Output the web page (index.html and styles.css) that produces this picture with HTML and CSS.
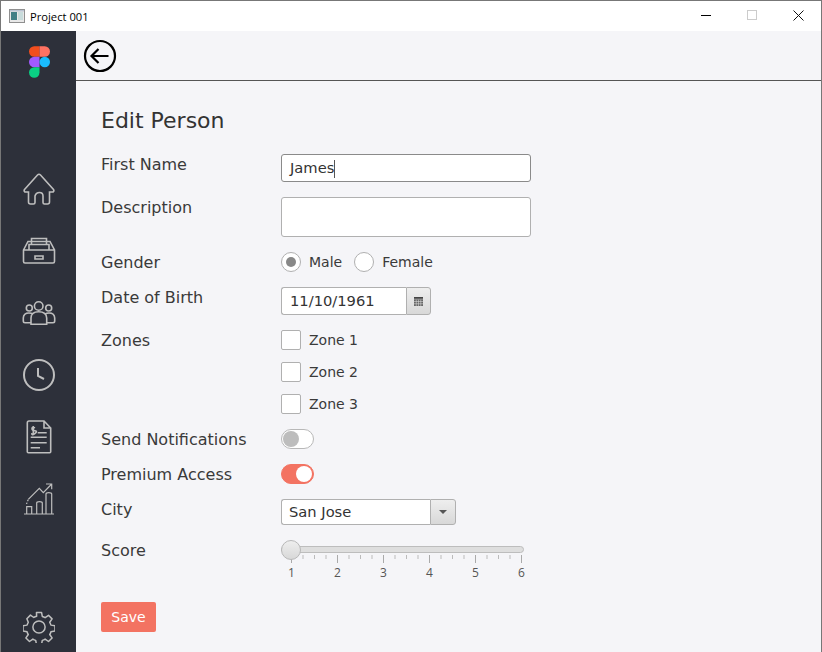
FILE: index.html
```html
<!DOCTYPE html>
<html lang="en">
<head>
    <meta charset="UTF-8">
    <meta name="viewport" content="width=device-width, initial-scale=1.0">
    <title>Project 001</title>
    <link rel="stylesheet" href="styles.css">
</head>
<body>
<div class="window">

    <header class="titlebar">
        <svg class="app-icon" width="16" height="14" viewBox="0 0 16 14">
            <rect x="0.5" y="0.5" width="15" height="13" fill="#e8e8e8" stroke="#8f8f8f"/>
            <rect x="2" y="3" width="6" height="8" fill="#3f7f86"/>
            <rect x="9" y="3" width="5" height="8" fill="#c8dcdc"/>
            <rect x="1" y="1" width="14" height="1.5" fill="#b9c4d2"/>
        </svg>
        <span class="window-title">Project 001</span>
        <div class="window-buttons">
            <svg width="12" height="12" viewBox="0 0 12 12"><path d="M0 6.500h10" stroke="#000" fill="none"/></svg>
            <svg width="12" height="12" viewBox="0 0 12 12"><rect x="0.500" y="1.500" width="9" height="9" stroke="#ccc" fill="none"/></svg>
            <svg width="12" height="12" viewBox="0 0 12 12"><path d="M0.500 1.500l10 10M10.500 1.500l-10 10" stroke="#111" fill="none"/></svg>
        </div>
    </header>

    <div class="app">
        <nav class="sidebar">
            <svg class="logo" width="21" height="32" viewBox="0 0 22 33">
                <path d="M11 0H5.500A5.500 5.500 0 0 0 5.500 11H11z" fill="#f24e1e"/>
                <path d="M11 0h5.500a5.500 5.500 0 0 1 0 11H11z" fill="#ff7262"/>
                <path d="M11 11H5.500a5.500 5.500 0 0 0 0 11H11z" fill="#a259ff"/>
                <circle cx="16.500" cy="16.500" r="5.500" fill="#1abcfe"/>
                <path d="M5.500 22H11v5.500a5.500 5.500 0 1 1-5.500-5.500z" fill="#0acf83"/>
            </svg>

            <div class="nav-icons">
                <svg width="34" height="34" viewBox="0 0 34 34">
                    <path d="M2.500 17.500 15.500 3q1.500-1.500 3 0L31.500 17.500q1 1.500-.5 2.500h-3.500V30q0 2-2 2h-3q-1.500 0-1.500-1.500V24q0-3.500-3.500-3.500T13 24v6.500q0 1.500-1.500 1.500h-3q-2 0-2-2V20H3q-1.500-1-.5-2.500z"/>
                </svg>
                <svg width="34" height="34" viewBox="0 0 34 34">
                    <path d="M1.500 16 6 7.500h22L32.500 16v11.500q0 1.500-1.500 1.500H3q-1.500 0-1.500-1.500zM1.500 16H32.500M7 16v-5.500h20V16M9.500 10.500v-6h15v6M13 22h8v3h-8z"/>
                </svg>
                <svg width="34" height="34" viewBox="0 0 34 34">
                    <circle cx="16.700" cy="10" r="4.300"/>
                    <circle cx="7.300" cy="12" r="3"/>
                    <circle cx="26.700" cy="12" r="3"/>
                    <path d="M9 28.300V22q0-6.300 7.700-6.300T24.700 22v6.300zM9 26.700H3q-1.700 0-1.700-1.700v-3Q1.500 17 7 17q2.500 0 3.500 1M24.700 26.700H31q1.700 0 1.700-1.700v-3q-.2-5-5.700-5-2.500 0-3.500 1"/>
                </svg>
                <svg class="clock" width="34" height="34" viewBox="0 0 34 34">
                    <circle cx="17" cy="17" r="15"/>
                    <path d="M16 10v8l6 3"/>
                </svg>
                <svg width="34" height="34" viewBox="0 0 34 34">
                    <path d="M7 1h15l6.700 7v23.700q0 1-1 1H6.300q-1 0-1-1V3q0-2 1.700-2zM22 1v7h6.700M15.700 12.700h9M8.700 17.300h16M8.700 22.700h16M8.700 27.700h9.300"/>
                    <path d="M13 7.800q-3-1.300-3 .7t3 2.300-.2 2.800-3-.5M11.300 6v8.500"/>
                </svg>
                <svg class="chart" width="34" height="34" viewBox="0 0 34 34">
                    <path d="M2 32h30M4.700 32v-7.300h5V32M14.700 32V21q0-1.300 2.800-1.300t2.800 1.300v11M24 32V12q0-1.300 2.800-1.300t2.900 1.300v20"/>
                    <path stroke-dasharray="1.500 1.500" d="M4.500 22 6.300 17.300"/>
                    <path d="M6.300 17.300 17.300 6.300l4 4.400L29.700 2M24 2h5.700v5.300"/>
                </svg>
            </div>

            <svg class="gear" width="32" height="32" viewBox="0 0 34 34">
                <circle cx="17" cy="17" r="6.500"/>
                <path d="M14.300 1.500h5.400l.8 4.300q1.800.5 3 1.300l3.600-2.500 3.800 3.800-2.500 3.600q.8 1.200 1.300 3l4.300.8v5.400l-4.300.8q-.5 1.800-1.300 3l2.500 3.600-3.800 3.800-3.600-2.500q-1.200.8-3 1.300l-.8 4.300h-5.400l-.8-4.300q-1.800-.5-3-1.300l-3.600 2.500-3.800-3.800 2.500-3.600q-.8-1.200-1.300-3l-4.300-.8v-5.400l4.300-.8q.5-1.800 1.300-3L4.100 8.200l3.800-3.800 3.600 2.500q1.200-.8 3-1.300z" stroke-linejoin="round"/>
            </svg>
        </nav>

        <main class="content">
            <div class="topbar">
                <svg width="34" height="34" viewBox="0 0 34 34">
                    <circle cx="17" cy="17" r="15" fill="none" stroke="#000" stroke-width="2.200"/>
                    <path d="M25.500 17H9M15.500 10 8.500 17l7 7" fill="none" stroke="#000" stroke-width="2.200"/>
                </svg>
            </div>

            <form class="person-form">
                <h1>Edit Person</h1>

                <div class="form-grid">
                    <label>First Name</label>
                    <div class="text-input">James<span class="caret"></span></div>

                    <label>Description</label>
                    <div class="text-input tall"></div>

                    <label>Gender</label>
                    <div class="radios">
                        <span class="radio checked"></span><span class="option-label">Male</span>
                        <span class="radio"></span><span class="option-label">Female</span>
                    </div>

                    <label>Date of Birth</label>
                    <div class="date-input">
                        <span class="date-value">11/10/1961</span>
                        <span class="addon">
                            <svg width="9" height="9" viewBox="0 0 10 10">
                                <path d="M0 0h10v2H0z" fill="#444"/>
                                <path d="M0 2.500h10v7.500H0z" fill="#666"/>
                                <path d="M2.500 3v7M5 3v7M7.500 3v7M0 5h10M0 7.500h10" stroke="#ddd" stroke-width=".6"/>
                            </svg>
                        </span>
                    </div>

                    <label>Zones</label>
                    <div class="checks">
                        <div class="check-row"><span class="checkbox"></span><span class="option-label">Zone 1</span></div>
                        <div class="check-row"><span class="checkbox"></span><span class="option-label">Zone 2</span></div>
                        <div class="check-row"><span class="checkbox"></span><span class="option-label">Zone 3</span></div>
                    </div>

                    <label>Send Notifications</label>
                    <div class="toggle"><span class="knob"></span></div>

                    <label>Premium Access</label>
                    <div class="toggle on"><span class="knob"></span></div>

                    <label>City</label>
                    <div class="select-input">
                        <span class="select-value">San Jose</span>
                        <span class="addon"><span class="arrow"></span></span>
                    </div>

                    <label>Score</label>
                    <div class="slider">
                        <div class="slider-track"><span class="slider-thumb"></span></div>
                        <svg class="ticks" width="232" height="8" viewBox="0 0 232 8">
                            <path d="M1.500 0v8M47.500 0v8M93.500 0v8M139.500 0v8M185.500 0v8M231.500 0v8" stroke="#aaa" fill="none"/>
                            <path d="M13 0v4M24.500 0v4M36 0v4M59 0v4M70.500 0v4M82 0v4M105 0v4M116.500 0v4M128 0v4M151 0v4M162.500 0v4M174 0v4M197 0v4M208.500 0v4M220 0v4" stroke="#bbb" fill="none"/>
                        </svg>
                        <div class="slider-labels">
                            <span>1</span><span>2</span><span>3</span><span>4</span><span>5</span><span>6</span>
                        </div>
                    </div>
                </div>

                <button type="button" class="save-button">Save</button>
            </form>
        </main>
    </div>
</div>
</body>
</html>
```

FILE: styles.css
```css
* {
    box-sizing: border-box;
}

html, body {
    margin: 0;
    padding: 0;
    height: 100%;
}

body {
    font-family: "DejaVu Sans", sans-serif;
    color: #333;
    background-color: #777;
    overflow: hidden;
}

.window {
    height: 652px;
    margin: 0 1px 0 1px;
    display: flex;
    flex-direction: column;
    padding-top: 1px;
}

.titlebar {
    height: 30px;
    flex: none;
    background-color: #fff;
    display: flex;
    align-items: center;
    padding-left: 8px;
    font-family: "Open Sans", sans-serif;
    font-size: 11.200px;
    color: #000;
}

.app-icon {
    margin-right: 5px;
}

.window-buttons {
    margin-left: auto;
    display: flex;
    gap: 34px;
    padding: 0 16px 2px 0;
}

.app {
    flex: 1;
    display: flex;
    min-height: 0;
}

.sidebar {
    width: 75px;
    flex: none;
    background-color: #2d303a;
    display: flex;
    flex-direction: column;
    align-items: center;
    padding-top: 15px;
    padding-left: 1px;
}

.nav-icons svg,
.gear {
    fill: none;
    stroke: #bebebe;
    stroke-width: 1.600;
}

.logo {
    flex: none;
}

.nav-icons {
    margin-top: 94px;
    display: flex;
    flex-direction: column;
    gap: 28px;
}

.nav-icons svg {
    display: block;
}

.nav-icons .clock {
    stroke-width: 2;
}

.nav-icons .chart {
    stroke-width: 1.200;
}

.gear {
    margin-top: auto;
    margin-bottom: 9px;
}

.content {
    flex: 1;
    background-color: #f5f5f8;
    display: flex;
    flex-direction: column;
}

.topbar {
    height: 50px;
    flex: none;
    border-bottom: 1px solid #555;
    padding: 8px 0 0 7px;
}

.topbar svg {
    display: block;
}

.person-form {
    padding: 26px 0 0 25px;
}

h1 {
    margin: 0 0 19px 0;
    font-size: 22px;
    line-height: 28px;
    font-weight: 400;
    color: #333;
}

.form-grid {
    display: grid;
    grid-template-columns: 180px 250px;
    row-gap: 15px;
}

label {
    height: 20px;
    font-size: 16px;
    line-height: 22px;
    color: #3a3a3a;
}

.text-input,
.date-value,
.select-value {
    background-color: #fff;
    font-size: 14.700px;
    color: #333;
}

.text-input {
    height: 28px;
    border: 1px solid #8a8a8a;
    border-radius: 3px;
    padding: 0 8px;
    line-height: 26px;
}

.text-input.tall {
    height: 40px;
    border-color: #b0b0b0;
}

.caret {
    display: inline-block;
    width: 1px;
    height: 18px;
    background-color: #555;
    vertical-align: middle;
}

.radios {
    display: flex;
    align-items: center;
    height: 20px;
}

.radio {
    width: 20px;
    height: 20px;
    border: 1px solid #b0b0b0;
    border-radius: 50%;
    background-color: #fff;
    display: flex;
    align-items: center;
    justify-content: center;
}

.radio.checked::after {
    content: "";
    width: 10px;
    height: 10px;
    border-radius: 50%;
    background-color: #888;
}

.option-label {
    font-size: 14px;
    margin-left: 8px;
    margin-right: 12px;
    color: #3a3a3a;
}

.date-input {
    width: 150px;
    height: 28px;
    display: flex;
}

.date-value {
    flex: 1;
    border: 1px solid #b0b0b0;
    border-right: none;
    border-radius: 3px 0 0 3px;
    padding-left: 8px;
    line-height: 26px;
}

.addon {
    width: 25px;
    border: 1px solid #b0b0b0;
    border-radius: 0 3px 3px 0;
    background: linear-gradient(#eee, #d8d8d8);
    display: flex;
    align-items: center;
    justify-content: center;
}

.checks {
    display: flex;
    flex-direction: column;
    gap: 12px;
}

.check-row {
    display: flex;
    align-items: center;
    height: 20px;
}

.checkbox {
    width: 20px;
    height: 20px;
    border: 1px solid #b0b0b0;
    border-radius: 2px;
    background-color: #fff;
}

.toggle {
    width: 33px;
    height: 20px;
    border: 1px solid #b8b8b8;
    border-radius: 10px;
    background-color: #fff;
    padding: 1px;
}

.knob {
    display: block;
    width: 16px;
    height: 16px;
    border-radius: 50%;
    background-color: #bdbdbd;
}

.toggle.on {
    background-color: #f37362;
    border-color: #f37362;
    display: flex;
    justify-content: flex-end;
}

.toggle.on .knob {
    background-color: #fff;
}

.select-input {
    width: 175px;
    height: 26px;
    display: flex;
}

.select-input .addon {
    width: 26px;
}

.select-value {
    flex: 1;
    border: 1px solid #b0b0b0;
    border-right: none;
    border-radius: 3px 0 0 3px;
    padding-left: 7px;
    line-height: 24px;
}

.arrow {
    width: 0;
    height: 0;
    border-left: 4px solid transparent;
    border-right: 4px solid transparent;
    border-top: 4px solid #555;
}

.slider {
    width: 243px;
    padding-top: 6px;
}

.slider-track {
    position: relative;
    height: 7px;
    border: 1px solid #bdbdbd;
    border-radius: 4px;
    background-color: #dedede;
}

/* thumb sits on top of the track */
.slider-thumb {
    position: absolute;
    left: -1px;
    top: -7px;
    width: 20px;
    height: 20px;
    border: 1px solid #b8b8b8;
    border-radius: 50%;
    background: linear-gradient(#eee, #d8d8d8);
}

.ticks {
    display: block;
    margin: 2px 0 0 9px;
}

.slider-labels {
    display: flex;
    justify-content: space-between;
    width: 244px;
    margin-top: 2px;
    padding: 0 0 0 7px;
    font-family: "Open Sans", sans-serif;
    font-size: 12px;
    line-height: 16px;
    color: #555;
}

.save-button {
    display: block;
    margin-top: 21px;
    width: 55px;
    height: 30px;
    padding: 0;
    border: none;
    border-radius: 2px;
    background-color: #f37362;
    color: #fff;
    font-family: "DejaVu Sans", sans-serif;
    font-size: 14px;
}
```
